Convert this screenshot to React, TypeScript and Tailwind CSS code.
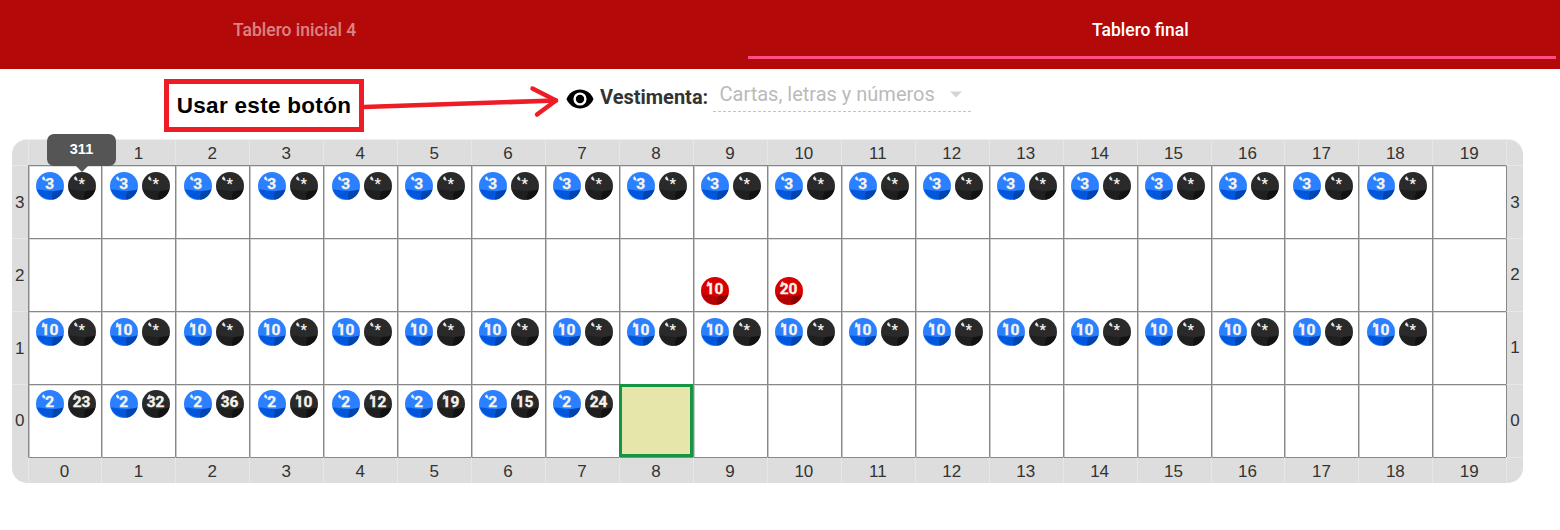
import React from "react";

type Tone = "blue" | "black" | "red";
type BallData = { tone: Tone; label: string };

const tones: Record<Tone, { base: string; low: string; deep: string; shine: string }> = {
  blue: { base: "#2a80ff", low: "#0057dc", deep: "#0044ae", shine: "#e4efff" },
  black: { base: "#2a2a2a", low: "#1f1f1f", deep: "#121212", shine: "#e2e2e2" },
  red: { base: "#d80000", low: "#b40000", deep: "#8c0000", shine: "#ffe4e4" },
};

const columns = Array.from({ length: 20 }, (_, i) => i);
const rows = [3, 2, 1, 0];
const bottomRow = ["23", "32", "36", "10", "12", "19", "15", "24"];

function ballsFor(row: number, col: number): BallData[] {
  if (row === 3 && col < 19) return [{ tone: "blue", label: "3" }, { tone: "black", label: "*" }];
  if (row === 2 && col === 9) return [{ tone: "red", label: "10" }];
  if (row === 2 && col === 10) return [{ tone: "red", label: "20" }];
  if (row === 1 && col < 19) return [{ tone: "blue", label: "10" }, { tone: "black", label: "*" }];
  if (row === 0 && col < 8) return [{ tone: "blue", label: "2" }, { tone: "black", label: bottomRow[col] }];
  return [];
}

function Ball({ tone, label }: BallData) {
  const c = tones[tone];
  const star = label === "*";
  return (
    <svg className="h-7 w-7 shrink-0" viewBox="0 0 28 28">
      <circle cx="14" cy="14" r="14" fill={c.base} />
      <path d="M.7 17.6C5 17 9 19 15 19C20 19 24 18.4 27.3 17.4A14 14 0 0 1 .7 17.6Z" fill={c.low} />
      <path d="M18 18.9C22 18.8 25 18.2 27.3 17.4A14 14 0 0 1 16.2 27.8C15.8 24.5 16.2 21 18 18.9Z" fill={c.deep} />
      <text
        x={star ? 13.8 : 13.6}
        y={star ? 16.6 : 17.2}
        textAnchor="middle"
        fontSize={star ? 14 : 15.5}
        stroke="#f5f4ea"
        strokeWidth={star ? 0 : 0.35}
        className="font-bold [font-family:Roboto,sans-serif]"
        fill="#f5f4ea"
      >
        {label}
      </text>
      <path d="M8 4.2C6.4 4.5 5.6 6.1 6.4 7.3C7.1 8.3 8.5 8.8 9.8 8.6C9.2 8 9.2 7.2 9.4 6.5C8.6 6 8.2 5.3 8 4.2Z" fill={c.shine} />
    </svg>
  );
}

function Tooltip() {
  return (
    <div className="absolute left-[35px] top-[-5px] flex h-8 w-[69px] justify-center rounded-[7px] bg-[#555] pt-[5px]">
      <span className="text-[14.5px] leading-[20px] font-bold text-white [font-family:'Liberation_Sans',Arial,sans-serif]">311</span>
      <svg className="absolute left-[28px] top-[31px] h-[7px] w-[14px]" viewBox="0 0 14 7">
        <path d="M0 0H14L7 7Z" fill="#555" />
      </svg>
    </div>
  );
}

function LabelRow() {
  return (
    <>
      <div />
      {columns.map((n) => (
        <div key={n} className="flex items-center justify-center border-l border-[#e7e7e7] pt-[2px] pr-px">
          {n === 0 ? null : n}
        </div>
      ))}
      <div className="border-l border-[#e7e7e7]" />
    </>
  );
}

function Board() {
  return (
    <div className="relative ml-3 w-[1511px]">
      <div className="grid h-[344px] grid-cols-[15.5px_repeat(20,73.95px)_16.5px] grid-rows-[25.4px_repeat(4,72.8px)_26.4px] overflow-hidden rounded-[15px] border-t border-[#eee] bg-[#ddd] text-[17px] text-[#333] [font-family:'Liberation_Sans',Arial,sans-serif]">
        <LabelRow />
        {rows.map((row) => (
          <React.Fragment key={row}>
            <div className="flex items-center justify-center border-t border-[#e7e7e7] pt-px">{row}</div>
            {columns.map((col) => {
              const selected = row === 0 && col === 8;
              return (
                <div
                  key={col}
                  className={
                    selected
                      ? "border-3 border-[#149444] bg-[#e7e6aa]"
                      : `flex gap-1 border-l border-t border-[#888] bg-white py-[5.6px] pl-[7.3px] shadow-[inset_1px_0_0_#c8c8c8,inset_0_1px_0_#dedede] ${row === 2 ? "items-end" : "items-start"}`
                  }
                >
                  {ballsFor(row, col).map((b, i) => (
                    <Ball key={i} {...b} />
                  ))}
                </div>
              );
            })}
            <div className="flex items-center justify-center border-l border-t border-l-[#888] border-t-[#e7e7e7]">{row}</div>
          </React.Fragment>
        ))}
        <div />
        {columns.map((n) => (
          <div
            key={n}
            className="flex items-center justify-center border-l border-t border-l-[#e7e7e7] border-t-[#888] pt-[2px] pr-px"
          >
            {n}
          </div>
        ))}
        <div className="border-l border-t border-[#e7e7e7]" />
      </div>
      <Tooltip />
    </div>
  );
}

export default function App() {
  return (
    <div className="h-[530px] w-[1560px] overflow-hidden bg-white [font-family:Roboto,sans-serif]">
      <header className="flex h-[69px] bg-[#b40909] text-[17.5px] leading-[60px] font-medium">
        <div className="w-[748px] pl-[233px] text-white/50">Tablero inicial 4</div>
        <div className="mb-[10px] w-[808px] border-b-3 border-[#ff4f80] pl-[344px] text-white">Tablero final</div>
      </header>
      <div className="flex h-[70px] items-start">
        <div className="mt-[10px] ml-[164px] flex h-[53px] w-[200px] items-center justify-center border-5 border-[#ee1c24] text-[22.5px] font-bold tracking-[0.3px] text-black [font-family:'Liberation_Sans',Arial,sans-serif]">
          Usar este botón
        </div>
        <svg className="h-[70px] w-[196px]" viewBox="364 69 196 70" fill="none" stroke="#ee1c24" strokeWidth="4.5" strokeLinecap="round" strokeLinejoin="round">
          <path d="M364 107L556 100.5" />
          <path d="M532.5 88.5L556 100.5L537 114.5" />
        </svg>
        <svg className="mt-[20px] ml-[6px] h-5 w-7" viewBox="0 0 28 20">
          <path d="M.5 10C3 4 8 .6 14 .6S25 4 27.5 10C25 16 20 19.4 14 19.4S3 16 .5 10Z" fill="#000" />
          <circle cx="14" cy="10" r="5.4" fill="none" stroke="#fff" strokeWidth="2.4" />
        </svg>
        <div className="mt-[15px] ml-[6px] w-[113px] text-[20px] leading-[26px] font-bold whitespace-nowrap text-[#333]">
          Vestimenta:
        </div>
        <div className="flex h-[43px] w-[258px] justify-between border-b border-dashed border-[#c4c4c4] pt-[12px] pr-[9px] pl-[6.5px] text-[20px] leading-[26px] text-[#bababa]">
          <span className="whitespace-nowrap">Cartas, letras y números</span>
          <svg className="mt-[10px] h-[7px] w-3" viewBox="0 0 12 7">
            <path d="M0 .5H12L6 6.5Z" fill="#d5d5d5" />
          </svg>
        </div>
      </div>
      <Board />
    </div>
  );
}
